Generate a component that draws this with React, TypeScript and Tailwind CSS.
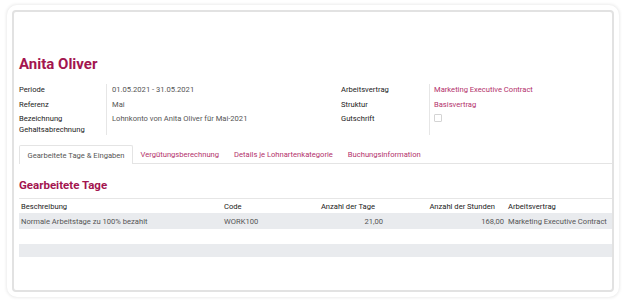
import React from "react";

const tabs = [
  "Gearbeitete Tage & Eingaben",
  "Vergütungsberechnung",
  "Details je Lohnartenkategorie",
  "Buchungsinformation",
];

const App = () => {
  return (
    <div className="w-[626px] h-[306px] bg-white pl-[7px] pt-[5px] font-['Roboto',sans-serif]">
      {/* outer frame */}
      <div className="w-[612px] h-[292px] rounded-[10px] bg-white shadow-[0_0_3px_1px_rgba(0,0,0,0.08)] p-[5px]">
        <div className="h-full border-2 border-[#e2e2e2] rounded-[4px] bg-white overflow-hidden pl-[5px] pt-[42px]">
          <h1 className="text-[15px] leading-[20px] font-bold text-[#a3154f]">Anita Oliver</h1>

          {/* header fields */}
          <div className="flex mt-[10px] text-[7.6px] leading-[11px]">
            <div className="flex w-[322px]">
              <div className="w-[87px] flex flex-col gap-[3.5px] text-[#222]">
                <div>Periode</div>
                <div>Referenz</div>
                <div className="w-[70px]">Bezeichnung Gehaltsabrechnung</div>
              </div>
              <div className="w-px bg-[#e6e6e6]"></div>
              <div className="pl-[5px] flex flex-col gap-[3.5px] text-[#555]">
                <div>01.05.2021 - 31.05.2021</div>
                <div>Mai</div>
                <div>Lohnkonto von Anita Oliver für Mai-2021</div>
              </div>
            </div>
            <div className="flex">
              <div className="w-[88px] flex flex-col gap-[3.5px] text-[#222]">
                <div>Arbeitsvertrag</div>
                <div>Struktur</div>
                <div>Gutschrift</div>
              </div>
              <div className="w-px h-[51px] bg-[#e6e6e6]"></div>
              <div className="pl-[4px] flex flex-col gap-[3.5px] text-[#b3306b]">
                <div>Marketing Executive Contract</div>
                <div>Basisvertrag</div>
                <div className="pt-[1px]">
                  <div className="w-[8px] h-[8px] border border-[#d4d4d4] rounded-[1px] bg-white"></div>
                </div>
              </div>
            </div>
          </div>

          {/* tabs */}
          <div className="mt-[10px] flex border-b border-[#e4e4e4] w-[620px] text-[7.6px] leading-[11px]">
            {tabs.map((t, i) =>
              i === 0 ? (
                <div
                  key={t}
                  className="px-[7.5px] h-[19px] flex items-center border border-b-0 border-[#e4e4e4] bg-white -mb-px text-[#555] rounded-t-[2px]"
                >
                  {t}
                </div>
              ) : (
                <div key={t} className="px-[7.5px] h-[18px] flex items-center text-[#b3306b]">
                  {t}
                </div>
              )
            )}
          </div>

          <h2 className="mt-[14px] text-[11.5px] leading-[15px] font-bold text-[#a3154f]">Gearbeitete Tage</h2>

          {/* table */}
          <div className="mt-[5px] w-[620px] text-[7.6px] leading-[11px] whitespace-nowrap">
            <div className="flex h-[15px] items-center border-t border-[#e6e6e6] text-[#222]">
              <div className="w-[203px] pl-[2px]">Beschreibung</div>
              <div className="w-[97px] pl-[2px]">Code</div>
              <div className="w-[66px] text-right pr-[10px]">Anzahl der Tage</div>
              <div className="w-[121px] text-right pr-[11px]">Anzahl der Stunden</div>
              <div className="pl-[2px]">Arbeitsvertrag</div>
            </div>
            <div className="flex h-[16px] items-center bg-[#e9ebee] text-[#555]">
              <div className="w-[203px] pl-[2px]">Normale Arbeitstage zu 100% bezahlt</div>
              <div className="w-[97px] pl-[2px]">WORK100</div>
              <div className="w-[66px] text-right pr-[2px]">21,00</div>
              <div className="w-[121px] text-right pr-[2px]">168,00</div>
              <div className="pl-[2px]">Marketing Executive Contract</div>
            </div>
            <div className="h-[15px]"></div>
            <div className="h-[13px] bg-[#e9ebee]"></div>
          </div>
        </div>
      </div>
    </div>
  );
};

export default App;
